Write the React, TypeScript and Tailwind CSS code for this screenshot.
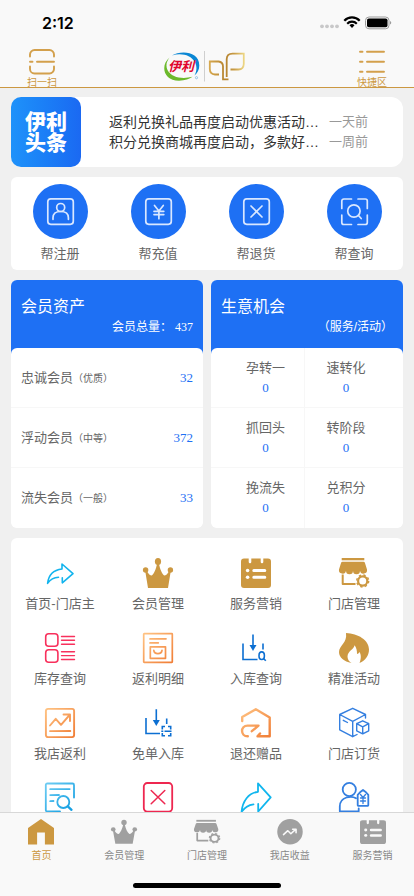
import type { ReactNode } from "react";

const GOLD = "#cc9841";

const NEWS = [
  { title: "返利兑换礼品再度启动优惠活动…", time: "一天前" },
  { title: "积分兑换商城再度启动，多款好…", time: "一周前" },
];

const ASSETS = [
  { name: "忠诚会员", note: "（优质）", count: 32 },
  { name: "浮动会员", note: "（中等）", count: 372 },
  { name: "流失会员", note: "（一般）", count: 33 },
];

const CHANCES = [
  ["孕转一", "速转化"],
  ["抓回头", "转阶段"],
  ["挽流失", "兑积分"],
];

function Svg({ size = 30, children }: { size?: number; children: ReactNode }) {
  return (
    <svg
      width={size}
      height={size}
      viewBox="0 0 30 30"
      fill="none"
      strokeLinecap="round"
      strokeLinejoin="round"
      className="overflow-visible"
      aria-hidden="true"
    >
      {children}
    </svg>
  );
}

/* ---------- shapes shared by the menu and the tab bar ---------- */

function Crown() {
  return (
    <g fill="currentColor">
      <ellipse cx="15" cy="3.4" rx="3.1" ry="3.5" />
      <circle cx="2.6" cy="12" r="2.7" />
      <circle cx="27.4" cy="12" r="2.7" />
      <path d="M5 30 2.3 13.5 4 13.2C5.5 16 7 17.5 8.8 17.6 11 16 13 11 14 6h2c1 5 3 10 5.2 11.6 1.8-.1 3.3-1.6 4.8-4.4l1.7.3L25 30Z" />
    </g>
  );
}

function Notes({ bg }: { bg: string }) {
  return (
    <>
      <rect y="0.5" width="30" height="29.5" rx="3" fill="currentColor" />
      <g stroke={bg}>
        <path d="M9 0v4M21 0v4" strokeWidth="2.6" />
        <path d="M12.8 12.5h11M12.8 19.3h11" strokeWidth="3" />
      </g>
      <circle cx="6.6" cy="12.5" r="1.8" fill={bg} />
      <circle cx="6.6" cy="19.3" r="1.8" fill={bg} />
    </>
  );
}

function Store() {
  return (
    <>
      <g fill="currentColor">
        <rect x="2.7" width="22.6" height="2.3" />
        <path d="M3.5 3.8h21a1.5 1.5 0 0 1 1.4 1L28 11.5a3.5 3.5 0 0 1-7 1.2 3.5 3.5 0 0 1-7 0 3.5 3.5 0 0 1-7 0 3.5 3.5 0 0 1-7-1.2L2.1 4.8a1.5 1.5 0 0 1 1.4-1Z" />
      </g>
      <g stroke="currentColor" strokeLinecap="butt">
        <path d="M3.7 16.5V26H16.5" strokeWidth="2" />
        <circle cx="23.7" cy="23" r="4.6" strokeWidth="2.2" />
        <circle cx="23.7" cy="23" r="6" strokeWidth="1.4" strokeDasharray="2.35 2.36" />
      </g>
    </>
  );
}

/* ---------- menu icons ---------- */

function OrangeFade({ id }: { id: string }) {
  return (
    <linearGradient id={id} x1="0" y1="0" x2="30" y2="30" gradientUnits="userSpaceOnUse">
      <stop stopColor="#ffc484" />
      <stop offset="1" stopColor="#f07c34" />
    </linearGradient>
  );
}

const MENU: { label?: string; icon: ReactNode }[] = [
  {
    label: "首页-门店主",
    icon: (
      <Svg>
        <path
          d="M13.5 19.3C8.5 19.6 5 22 2.6 25.3 3.5 17.5 8.5 12 17 11V6l11 9.600-10.700 9.200V19.800"
          stroke="#12b4ee"
          strokeWidth="1.6"
        />
      </Svg>
    ),
  },
  { label: "会员管理", icon: <Svg><g color={GOLD}><Crown /></g></Svg> },
  { label: "服务营销", icon: <Svg><g color={GOLD}><Notes bg="#fff" /></g></Svg> },
  { label: "门店管理", icon: <Svg><g color={GOLD}><Store /></g></Svg> },
  {
    label: "库存查询",
    icon: (
      <Svg>
        <g stroke="#f8305c" strokeWidth="1.6">
          <rect x="0.7" y="0.7" width="12.2" height="12.6" rx="3" />
          <rect x="0.7" y="16.7" width="12.2" height="12.6" rx="3" />
          <path d="M16.5 3.5h13M16.5 7.3h13M16.5 11.2h13M16.5 18.8h13M16.5 22.6h13M16.5 26.5h13" strokeWidth="1.4" />
        </g>
      </Svg>
    ),
  },
  {
    label: "返利明细",
    icon: (
      <Svg>
        <OrangeFade id="rebate" />
        <g stroke="url(#rebate)" strokeWidth="1.7">
          <rect x="0.7" y="0.7" width="28.6" height="28.6" rx="0.5" />
          <path d="M7 5.9 23 5.8M7 9.9 15.3 9.8" />
          <rect x="7.3" y="13.8" width="15.2" height="11.5" />
          <path d="M10.8 17.3c.4 4.3 7.8 4.3 8.2 0" />
        </g>
      </Svg>
    ),
  },
  {
    label: "入库查询",
    icon: (
      <Svg>
        <g stroke="#0c6fd2" strokeWidth="1.6" strokeLinecap="butt" strokeLinejoin="miter">
          <path d="M2 10.5V26.5H16.5M12 1.5V13M22 10.5v6" />
          <ellipse cx="20.7" cy="22.7" rx="2.7" ry="3.8" />
          <path d="m22.5 25.5 2.3 2.3" />
        </g>
        <path d="M8.5 12h7L12 18Z" fill="#0c6fd2" />
      </Svg>
    ),
  },
  {
    label: "精准活动",
    icon: (
      <Svg>
        <path
          d="M7 0C19 .5 30 7 30 16.5 30 22.5 26.5 27.5 20.5 30 22 26.5 22.5 22 20.5 19 19.8 20.3 19 21 18 21 18.2 18 17.3 14.5 15.5 12.3 15 16.5 8.7 18 8.5 23.5 8.4 26 10 28.5 12.5 30 5 28.5 0 24.5 0 19 0 12.5 8.5 10 7 0Z"
          fill={GOLD}
        />
      </Svg>
    ),
  },
  {
    label: "我店返利",
    icon: (
      <Svg>
        <OrangeFade id="trend" />
        <g stroke="url(#trend)" strokeWidth="1.9">
          <rect x="0.9" y="0.9" width="28.2" height="28.2" rx="2" />
          <path d="m5 17.5 5.7-6.7 5.3 6L25 6.5M18.5 6.5H25V13M5 23.1 25.3 23" />
        </g>
      </Svg>
    ),
  },
  {
    label: "免单入库",
    icon: (
      <Svg>
        <g stroke="#0c6fd2" strokeWidth="1.6" strokeLinecap="butt" strokeLinejoin="miter">
          <path d="M3 10V25.5H17M13.3 1.3V13M23.7 10.5v5.5" />
          <path d="M19.3 21.5v-3h2.7M25 18.5h2.7v3M27.7 25v2.7H25M22 27.700h-2.700V25M18.300 23.200h2M21.500 23.200h7" />
        </g>
        <path d="M9.800 12h7l-3.500 6Z" fill="#0c6fd2" />
      </Svg>
    ),
  },
  {
    label: "退还赠品",
    icon: (
      <Svg>
        <OrangeFade id="gift" />
        <path
          d="M1.200 13V9L14.800 1.200 28.700 9.500V28.300H16.500L19 25.500M6.800 28.300C-.8 28.300-.8 17.600 6.500 17.600H17.500L10.800 23.200"
          stroke="url(#gift)"
          strokeWidth="2.400"
        />
      </Svg>
    ),
  },
  {
    label: "门店订货",
    icon: (
      <Svg>
        <g stroke="#347fe0" strokeWidth="1.400">
          <path d="M26.500 10V6.500L13.700.3.700 6.500V21.800l13 6.900V13.300L.7 6.500M13.700 13.300 26.500 6.500M13.700 28.700 18 26.500M4.300 12.300 8.500 14.500" />
          <path d="m23.700 12.800 6 2.800v7.200l-6 3-6-3v-7.200ZM17.700 15.600l6 3.200 6-3.200M23.700 18.800v7" />
        </g>
      </Svg>
    ),
  },
  {
    icon: (
      <Svg>
        <linearGradient id="search" x1="0" y1="0" x2="30" y2="30" gradientUnits="userSpaceOnUse">
          <stop stopColor="#6fcdf3" />
          <stop offset="1" stopColor="#0899e0" />
        </linearGradient>
        <g stroke="url(#search)" strokeWidth="1.8">
          <path d="M15 28.500H2.300a1.500 1.500 0 0 1-1.500-1.500V2A1.500 1.500 0 0 1 2.300.5H27.500A1.500 1.500 0 0 1 29 2v12.500" />
          <path d="M5.200 6.200 24.700 6.100M5.200 12.100 14 12M5.200 18.100 8.500 18" />
          <circle cx="18.3" cy="19" r="6" />
          <path d="m22.800 23.300 3.700 3.500" strokeWidth="2.3" />
        </g>
      </Svg>
    ),
  },
  {
    icon: (
      <Svg>
        <g stroke="#ee2750" strokeWidth="1.8">
          <rect x="0.8" y="0" width="28.4" height="28.6" rx="3.5" />
          <path d="m8.200 7.500 13.600 13.300M21.800 7.500 8.200 20.800" strokeWidth="1.5" />
        </g>
      </Svg>
    ),
  },
  {
    icon: (
      <Svg>
        <path
          d="M12.500 21.300C7 22 3.500 24.500.6 28.800 1.500 18 7.500 10 17 8.800V.3l12.700 14L17.200 28.500V21"
          stroke="#10b6ee"
          strokeWidth="1.8"
        />
      </Svg>
    ),
  },
  {
    icon: (
      <Svg>
        <g stroke="#347fe0" strokeWidth="1.8">
          <circle cx="10.3" cy="6.5" r="6.600" />
          <path d="M17 15.300C14.500 13.600 11 13.500 7.500 14.500 3.200 15.800.8 19.500.8 23.500V28.300H19.700V25.500" />
          <path d="m24 7 3 2.300 2.300 2.500V22a.8.8 0 0 1-.8.8h-9a.8.8 0 0 1-.8-.8V11.800L21 9.300Z" />
          <path d="m21.500 11.500 2.500 3 2.500-3M24 14.500V20.500M21.500 15h5M21.500 18h5" strokeWidth="1.3" />
        </g>
      </Svg>
    ),
  },
];

/* ---------- round shortcuts, drawn on a 55px disc ---------- */

const QUICK: { label: string; icon: ReactNode }[] = [
  {
    label: "帮注册",
    icon: (
      <>
        <rect x="14.8" y="14.8" width="25.5" height="25.5" rx="3" />
        <circle cx="27.7" cy="23.5" r="4" />
        <path d="M20 35.300v-1.500c0-4 3-6.300 7.700-6.300s7.700 2.300 7.700 6.300v1.500" />
      </>
    ),
  },
  {
    label: "帮充值",
    icon: (
      <>
        <rect x="14.8" y="14.8" width="25.5" height="25.5" rx="3" />
        <path d="m23.500 21.500 4.400 5.500 4.400-5.500M27.900 27v7.700M23 27.300h9.800M23 30.600h9.800" />
      </>
    ),
  },
  {
    label: "帮退货",
    icon: (
      <>
        <rect x="14.8" y="14.8" width="25.5" height="25.5" rx="3" />
        <path d="m22 22 11 11M33 22 22 33" />
      </>
    ),
  },
  {
    label: "帮查询",
    icon: (
      <>
        <path d="M14.800 24.500V17a2 2 0 0 1 2-2H24.500M31 15h7.300a2 2 0 0 1 2 2v7.500M40.300 31v7.500a2 2 0 0 1-2 2H31M24.500 40.500H16.800a2 2 0 0 1-2-2V31" />
        <circle cx="26.9" cy="27" r="6.2" />
        <path d="m31.500 31.500 2.700 3" />
      </>
    ),
  },
];

const TABS: { label: string; active?: boolean; icon: ReactNode }[] = [
  {
    label: "首页",
    active: true,
    icon: (
      <path d="M15 0 30 10.500V29.500H19.500V15.500H10.500V29.500H0V10.500Z" fill="currentColor" />
    ),
  },
  { label: "会员管理", icon: <g transform="translate(0 1) scale(1 .92)"><Crown /></g> },
  { label: "门店管理", icon: <g transform="translate(0 1) scale(1 .92)"><Store /></g> },
  {
    label: "我店收益",
    icon: (
      <>
        <circle cx="15" cy="14.7" r="14.7" fill="currentColor" />
        <path d="m7.500 18 5-4.500 3.500 3.500 5.500-5M18 11.800h4v4" stroke="#f9f9f9" strokeWidth="1.8" />
      </>
    ),
  },
  { label: "服务营销", icon: <g transform="translate(0 1) scale(1 .93)"><Notes bg="#f9f9f9" /></g> },
];

function StatusBar() {
  return (
    <div className="flex h-11 items-center justify-between pl-[42px] pr-[22px] text-black">
      <span className="pt-[2px] font-['Inter',sans-serif] text-base font-semibold leading-5">2:12</span>
      <svg width="73" height="16" viewBox="0 0 73 16" aria-hidden="true">
        <g fill="#c8c8c9">
          <circle cx="3" cy="12.3" r="1.9" />
          <circle cx="8" cy="12.3" r="1.9" />
          <circle cx="13" cy="12.3" r="1.9" />
          <circle cx="18" cy="12.3" r="1.9" />
        </g>
        <g fill="none" stroke="#000" strokeWidth="2.2">
          <path d="M25.300 6.700a10.600 10.600 0 0 1 15.400 0" />
          <path d="M28.200 9.700a6.800 6.800 0 0 1 9.600 0" />
        </g>
        <path d="m33 14-2.500-2.700a3.500 3.500 0 0 1 5 0Z" />
        <rect x="46.500" y="3" width="23.500" height="11.800" rx="3.5" fill="none" stroke="#9b9b9b" />
        <rect x="48" y="4.500" width="20.500" height="8.800" rx="1.800" />
        <path d="M71 7c1.700.6 1.700 3 0 3.600Z" fill="#9b9b9b" />
      </svg>
    </div>
  );
}

function Logo() {
  return (
    <svg width="88" height="32" viewBox="0 0 88 32" role="img" aria-label="伊利">
      <path d="M9 4.500C17-.8 36.300-.5 36.300 14.500 36.300 18.500 34.500 22 31.500 24.500 33.700 20.500 34.300 15.500 31.800 11 28 4 18 1.500 9 4.500Z" fill="#0b87d4" />
      <path d="M6.500 6.500C-3 14.500.5 29.700 16 29.700 22 29.700 26.500 28 29.500 25.800 20 28.300 8.500 27 4.500 19 2.500 14.500 3.500 10.500 6.500 6.500Z" fill="#6bb92b" />
      <text
        x="18"
        y="20"
        fontSize="13"
        fontWeight="700"
        fontStyle="italic"
        textAnchor="middle"
        fill="#e0052d"
        fontFamily="'Noto Sans CJK SC', sans-serif"
      >
        伊利
      </text>
      <circle cx="33.5" cy="26.7" r="1.1" fill="none" stroke="#7fb9e0" strokeWidth="0.8" />
      <path d="M41.500 0V30.500" stroke="#cfcfcf" />
      <linearGradient id="leaf" x1="46" y1="0" x2="82" y2="0" gradientUnits="userSpaceOnUse">
        <stop stopColor="#d7a94f" />
        <stop offset="0.45" stopColor="#b5832f" />
        <stop offset="0.7" stopColor="#c99c45" />
        <stop offset="1" stopColor="#f0dc8c" />
      </linearGradient>
      <g fill="none" stroke="url(#leaf)" strokeWidth="1.8">
        <path d="M56 23.500H52Q46.800 23 46.800 18V10.500H55.500Q60 11 60 15.500V28.400H65.500" />
        <path d="M63.700 26V8Q64 2.700 69.500 2.700H80.800V13Q80.500 18.500 75.500 18.500H67.500" />
      </g>
    </svg>
  );
}

export default function App() {
  return (
    <div
      lang="zh-CN"
      className="flex h-screen flex-col bg-[#f0f0f0] font-['Liberation_Sans','Noto_Sans_CJK_SC',sans-serif] text-[13px] text-[#666]"
    >
      <header className="shrink-0 border-b border-[#cc9841] bg-[#f9f9f9]">
        <StatusBar />
        <div className="flex h-[43px] items-start justify-between px-[27px] text-[#cc9841]">
          <button type="button" className="flex flex-col items-center gap-[2px] pt-[5px] text-[10px] leading-3">
            <svg width="26" height="26" viewBox="0 0 26 26" fill="none" stroke="#d3a04c" strokeWidth="1.9" strokeLinecap="round" aria-hidden="true">
              <path d="M1 7.500V5.500a4.500 4.500 0 0 1 4.500-4.500h15A4.500 4.500 0 0 1 25 5.500v2M1 17.500v2.500a4.500 4.500 0 0 0 4.500 4.500h15A4.500 4.500 0 0 0 25 20v-2.500M1 12.700h2.500M8 12.700H25" />
            </svg>
            扫一扫
          </button>
          <div className="pt-[7px]">
            <Logo />
          </div>
          <button type="button" className="flex flex-col items-center gap-[2px] pt-[5px] text-[10px] leading-3">
            <svg width="26" height="26" viewBox="0 0 26 26" fill="none" stroke="#d3a04c" strokeWidth="1.9" strokeLinecap="round" aria-hidden="true">
              <path d="M1 2.800h2.500M8 2.800H25M1 12.800h2.500M8 12.800H25M1 22.800h2.500M8 22.800H25" />
            </svg>
            快捷区
          </button>
        </div>
      </header>

      <main className="flex min-h-0 flex-1 flex-col gap-[10px] overflow-y-auto px-[11px] pt-[9px] [scrollbar-width:none]">
        {/* Headlines */}
        <section className="flex shrink-0 items-center rounded-xl bg-white">
          <h2 className="flex size-[70px] shrink-0 items-center justify-center rounded-[10px] bg-linear-to-r from-[#1f92fa] to-[#1b69f2] text-center text-[21px] font-black leading-[21px] text-white">
            伊利
            <br />
            头条
          </h2>
          <ul className="min-w-0 flex-1 pl-7 pr-[35px] leading-5">
            {NEWS.map((n) => (
              <li key={n.title} className="flex justify-between gap-2">
                <a href="#" className="truncate text-sm leading-5 text-[#333]">{n.title}</a>
                <time className="shrink-0 text-[#999]">{n.time}</time>
              </li>
            ))}
          </ul>
        </section>

        {/* Shortcuts */}
        <section className="grid shrink-0 grid-cols-4 rounded-md bg-white pb-[6px] pt-[7px]">
          {QUICK.map((q) => (
            <button key={q.label} type="button" className="flex flex-col items-center gap-[5px] leading-5">
              <svg width="55" height="55" viewBox="0 0 55 55" fill="none" aria-hidden="true">
                <circle cx="27.5" cy="27.5" r="27.5" fill="#1e70f4" />
                <g stroke="#d9e7ff" strokeWidth="1.7" strokeLinecap="round" strokeLinejoin="round">
                  {q.icon}
                </g>
              </svg>
              {q.label}
            </button>
          ))}
        </section>

        <div className="grid shrink-0 grid-cols-2 gap-2">
          {/* Members */}
          <section className="overflow-hidden rounded-md bg-white">
            <div className="bg-[#1e70f4] px-[10px] pb-[17px] pt-4 text-white">
              <h2 className="text-base leading-[21px]">会员资产</h2>
              <p className="text-right text-xs leading-5">
                会员总量：<span className="pl-[3px] font-['Liberation_Serif',serif]">437</span>
              </p>
            </div>
            <ul className="-mt-[6px] divide-y divide-[#f7f7f7] rounded-md bg-white">
              {ASSETS.map((a) => (
                <li key={a.name} className="flex h-[60px] items-center justify-between px-[10px]">
                  <span>
                    {a.name}
                    <span className="text-[10px]">{a.note}</span>
                  </span>
                  <span className="font-['Liberation_Serif',serif] text-[#1e70f4]">{a.count}</span>
                </li>
              ))}
            </ul>
          </section>

          {/* Opportunities */}
          <section className="overflow-hidden rounded-md bg-white">
            <div className="bg-[#1e70f4] px-[10px] pb-[17px] pt-4 text-white">
              <h2 className="text-base leading-[21px]">生意机会</h2>
              <p className="text-right text-xs leading-5">（服务/活动）</p>
            </div>
            <div className="-mt-[6px] divide-y divide-[#f7f7f7] rounded-md bg-white">
              {CHANCES.map(([left, right]) => (
                <div key={left} className="grid h-[60px] grid-cols-[49%_51%] text-center leading-5">
                  <div className="border-r border-[#f7f7f7] pl-4 pt-[10px]">
                    <p>{left}</p>
                    <p className="font-['Liberation_Serif',serif] text-[#1e70f4]">0</p>
                  </div>
                  <div className="pr-4 pt-[10px]">
                    <p>{right}</p>
                    <p className="font-['Liberation_Serif',serif] text-[#1e70f4]">0</p>
                  </div>
                </div>
              ))}
            </div>
          </section>
        </div>

        {/* Menu */}
        <nav className="grid shrink-0 grid-cols-4 gap-y-[19px] rounded-md bg-white py-5">
          {MENU.map((m, i) => (
            <a key={i} href="#" className="flex flex-col items-center gap-[6px] leading-5">
              {m.icon}
              {m.label}
            </a>
          ))}
        </nav>
      </main>

      <footer className="z-10 shrink-0 border-t border-[#d8d8d8] bg-[#f9f9f9] pb-2">
        <nav className="grid grid-cols-5 pt-[6px]">
          {TABS.map((t) => (
            <a
              key={t.label}
              href="#"
              className={`flex flex-col items-center gap-[5px] text-[10px] leading-3 ${
                t.active ? "text-[#cc9841]" : "text-[#888]"
              }`}
            >
              <span className={t.active ? "text-[#cc9841]" : "text-[#a0a0a0]"}>
                <Svg size={26}>{t.icon}</Svg>
              </span>
              {t.label}
            </a>
          ))}
        </nav>
        <div className="mx-auto mt-[21px] h-[5px] w-[148px] rounded-full bg-black" />
      </footer>
    </div>
  );
}
